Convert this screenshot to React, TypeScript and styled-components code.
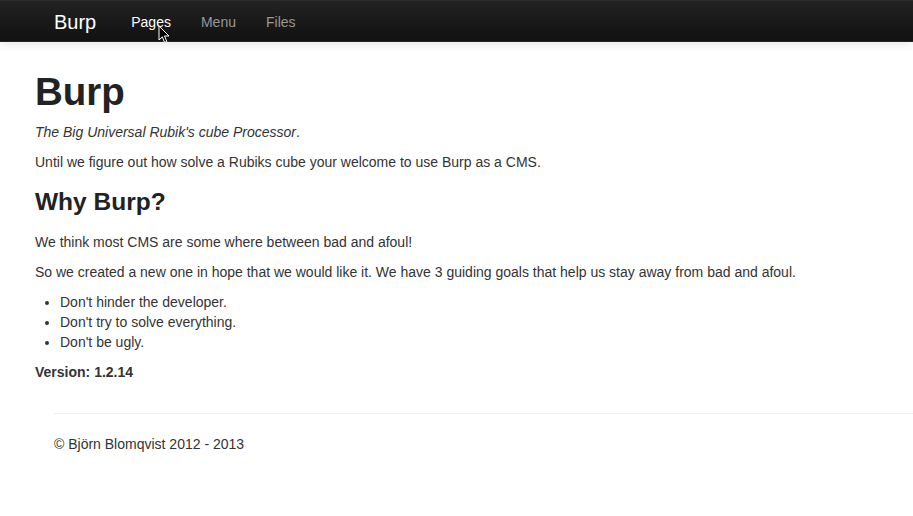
import React from "react";
import styled, { createGlobalStyle } from "styled-components";

const GlobalStyle = createGlobalStyle`
  html, body { margin: 0; padding: 0; background: #fff; }
  body {
    font-family: "Liberation Sans", Arial, Helvetica, sans-serif;
    font-size: 14px;
    line-height: 20px;
    color: #333;
    overflow: hidden;
  }
`;

const NavBar = styled.header`
  position: relative;
  z-index: 2;
  background-image: linear-gradient(to bottom, #222222, #111111);
  border-top: 1px solid #2c2c2c;
  border-bottom: 1px solid #252525;
  box-sizing: border-box;
  height: 42px;
  box-shadow: 0 1px 10px rgba(0, 0, 0, 0.12);
  display: flex;
  align-items: flex-start;
  padding-left: 34px;
`;

const Brand = styled.a`
  display: block;
  padding: 11px 20px 10px;
  font-size: 20px;
  line-height: 20px;
  font-weight: 200;
  color: #fff;
  text-decoration: none;
`;

const NavList = styled.ul`
  display: flex;
  margin: 0;
  padding: 0;
  list-style: none;
`;

const NavLink = styled.a<{ $active?: boolean }>`
  display: block;
  padding: 11px 15px 10px;
  color: ${(p) => (p.$active ? "#ffffff" : "#999999")};
  text-decoration: none;
  text-shadow: 0 -1px 0 rgba(0, 0, 0, 0.25);
`;

const Cursor = styled.svg`
  position: absolute;
  left: 158px;
  top: 25px;
  z-index: 5;
`;

const Main = styled.main`
  display: flow-root;
  padding: 20px 20px 0 35px;
`;

const Title = styled.h1`
  margin: 10px 0;
  font-size: 38.5px;
  line-height: 40px;
  font-weight: bold;
  color: #222;
`;

const SubTitle = styled.h2`
  margin: 10px 0;
  font-size: 24.5px;
  line-height: 40px;
  font-weight: bold;
  color: #222;
`;

const Para = styled.p`
  margin: 0 0 10px;
`;

const List = styled.ul`
  margin: 0 0 10px 25px;
  padding: 0;
`;

const Item = styled.li`
  line-height: 20px;
`;

const Footer = styled.footer`
  padding: 21px 0 0 54px;
`;

const Rule = styled.hr`
  margin: 0 0 19px;
  border: 0;
  border-top: 1px solid #eeeeee;
  border-bottom: 1px solid #ffffff;
`;

export default function App() {
  return (
    <>
      <GlobalStyle />
      <NavBar>
        <Brand href="#">Burp</Brand>
        <NavList>
          <li>
            <NavLink href="#" $active>
              Pages
            </NavLink>
          </li>
          <li>
            <NavLink href="#">Menu</NavLink>
          </li>
          <li>
            <NavLink href="#">Files</NavLink>
          </li>
        </NavList>
      </NavBar>
      <Cursor width="13" height="19" viewBox="0 0 13 19">
        <path
          d="M1 1 L1 15 L4.3 11.8 L6.6 17.4 L8.8 16.5 L6.5 11 L11 11 Z"
          fill="#000"
          stroke="#fff"
          strokeWidth="1"
          strokeLinejoin="round"
        />
      </Cursor>
      <Main>
        <Title>Burp</Title>
        <Para>
          <em>The Big Universal Rubik's cube Processor</em>.
        </Para>
        <Para>
          Until we figure out how solve a Rubiks cube your welcome to use Burp as a CMS.
        </Para>
        <SubTitle>Why Burp?</SubTitle>
        <Para>We think most CMS are some where between bad and afoul!</Para>
        <Para>
          So we created a new one in hope that we would like it. We have 3 guiding goals that help us stay away from bad and afoul.
        </Para>
        <List>
          <Item>Don't hinder the developer.</Item>
          <Item>Don't try to solve everything.</Item>
          <Item>Don't be ugly.</Item>
        </List>
        <Para>
          <strong>Version: 1.2.14</strong>
        </Para>
      </Main>
      <Footer>
        <Rule />
        <Para>© Björn Blomqvist 2012 - 2013</Para>
      </Footer>
    </>
  );
}
